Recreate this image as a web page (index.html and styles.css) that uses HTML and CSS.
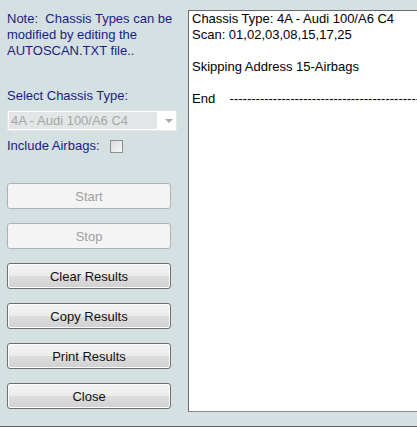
FILE: index.html
```html
<!DOCTYPE html>
<html>
<head>
    <meta charset="utf-8">
    <title>Auto-Scan</title>
    <link rel="stylesheet" href="styles.css">
</head>
<body>
    <div class="scan-window">
        <div class="controls">
            <p class="note">Note:&nbsp; Chassis Types can be modified by editing the AUTOSCAN.TXT file..</p>

            <label class="field-label">Select Chassis Type:</label>
            <div class="combo">
                <span class="combo-value">4A - Audi 100/A6 C4</span>
                <span class="combo-arrow"></span>
            </div>

            <div class="airbags">
                <span>Include Airbags:</span>
                <span class="checkbox"></span>
            </div>

            <div class="buttons">
                <button class="btn" disabled>Start</button>
                <button class="btn" disabled>Stop</button>
                <button class="btn">Clear Results</button>
                <button class="btn">Copy Results</button>
                <button class="btn">Print Results</button>
                <button class="btn">Close</button>
            </div>
        </div>

        <div class="results">
            <div>Chassis Type: 4A - Audi 100/A6 C4</div>
            <div>Scan: 01,02,03,08,15,17,25</div>
            <div>&nbsp;</div>
            <div>Skipping Address 15-Airbags</div>
            <div>&nbsp;</div>
            <div class="end-line">End&nbsp;&nbsp;&nbsp; ---------------------------------------------</div>
        </div>
    </div>
</body>
</html>
```

FILE: styles.css
```css
body {
    margin: 0;
    background: #d4e0e1;
    font-family: 'Liberation Sans', Arial, sans-serif;
    font-size: 13px;
    overflow: hidden;
}

.scan-window {
    display: flex;
    height: 427px;
    border-bottom: 1px solid #5b5f60;
    box-sizing: border-box;
}

.controls {
    width: 181px;
    padding-left: 7px;
    display: flex;
    flex-direction: column;
}

.note {
    margin: 11px 0 0 0;
    line-height: 16px;
    color: #1c1c86;
}

.field-label {
    margin-top: 29px;
    line-height: 16px;
    color: #1c1c86;
}

.combo {
    margin-top: 6px;
    width: 170px;
    height: 21px;
    box-sizing: border-box;
    border: 1px solid #e4e8e8;
    background: #ffffff;
    display: flex;
    align-items: center;
    padding: 1px;
}

.combo-value {
    width: 146px;
    height: 17px;
    line-height: 17px;
    padding-left: 2px;
    background: #e3e6e6;
    color: #a3a7a7;
}

.combo-arrow {
    margin-left: 8px;
    width: 0;
    height: 0;
    border-left: 4px solid transparent;
    border-right: 4px solid transparent;
    border-top: 4px solid #a9adad;
}

.airbags {
    margin-top: 7px;
    display: flex;
    align-items: center;
    line-height: 16px;
    color: #1c1c86;
}

.checkbox {
    margin-left: 10px;
    width: 11px;
    height: 11px;
    border: 1px solid #8e8f8f;
    background: linear-gradient(135deg, #dcdcdc, #f6f6f6);
}

.buttons {
    margin-top: 29px;
    display: flex;
    flex-direction: column;
    gap: 14px;
}

.btn {
    width: 164px;
    height: 26px;
    padding: 0;
    border: 1px solid #707070;
    border-radius: 3px;
    background: linear-gradient(#f3f3f3 0%, #ececec 50%, #dedede 50%, #d0d0d0 100%);
    box-shadow: inset 0 0 0 1px #fcfcfc;
    font-family: 'Liberation Sans', Arial, sans-serif;
    font-size: 13px;
    color: #111111;
}

.btn:disabled {
    border-color: #adb2b5;
    background: #f4f4f4;
    box-shadow: none;
    color: #a0a0a0;
}

.results {
    margin-top: 10px;
    height: 402px;
    flex: 1;
    box-sizing: border-box;
    background: #ffffff;
    border-top: 1px solid #6b6b6b;
    border-left: 1px solid #6b6b6b;
    border-bottom: 1px solid #888c8d;
    padding: 0 0 0 3px;
    line-height: 16px;
    color: #000000;
    white-space: nowrap;
    overflow: hidden;
}
```
